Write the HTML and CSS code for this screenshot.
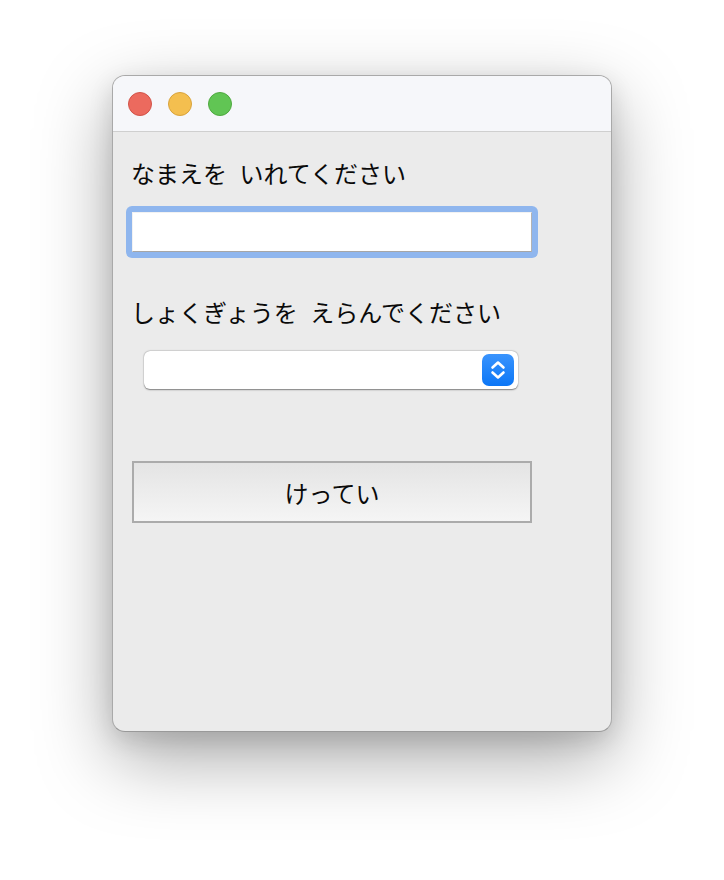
FILE: index.html
```html
<!DOCTYPE html>
<html lang="ja">
<head>
<meta charset="utf-8">
<title>Form</title>
<link rel="stylesheet" href="styles.css">
</head>
<body>
<div class="window">
  <div class="titlebar">
    <span class="light red"></span>
    <span class="light yellow"></span>
    <span class="light green"></span>
  </div>
  <div class="content">
    <div class="label">なまえを いれてください</div>
    <div class="focus-ring"><div class="textfield"></div></div>
    <div class="label label2">しょくぎょうを えらんでください</div>
    <div class="select">
      <span class="stepper">
        <svg width="32" height="32" viewBox="0 0 32 32">
          <path d="M10.5 13.5 L16 8.5 L21.5 13.5" fill="none" stroke="#fff" stroke-width="2.6" stroke-linecap="round" stroke-linejoin="round"/>
          <path d="M10.5 18.5 L16 23.5 L21.5 18.5" fill="none" stroke="#fff" stroke-width="2.6" stroke-linecap="round" stroke-linejoin="round"/>
        </svg>
      </span>
    </div>
    <div class="button">けってい</div>
  </div>
</div>
</body>
</html>
```

FILE: styles.css
```css
html, body {
  margin: 0;
  padding: 0;
  background: #ffffff;
}
body {
  padding: 75px 0 0 112px;
  min-height: 880px;
  box-sizing: border-box;
  font-family: "Noto Sans CJK JP", "Noto Sans", sans-serif;
}
.window {
  width: 498px;
  height: 655px;
  background: #ebebeb;
  border: 1px solid #a9a9a9;
  border-bottom-color: #999;
  border-radius: 13px;
  overflow: hidden;
  box-shadow: 0 26px 75px rgba(0, 0, 0, 0.34), 0 8px 24px rgba(0, 0, 0, 0.12);
}
.titlebar {
  height: 55px;
  background: #f6f7fa;
  border-bottom: 1px solid #cfcfcf;
  display: flex;
  align-items: center;
  gap: 16px;
  padding-left: 15px;
}
.light {
  width: 22px;
  height: 22px;
  border-radius: 50%;
  border: 1px solid rgba(0, 0, 0, 0.12);
}
.red { background: #ec6a5e; border-color: #d25348; }
.yellow { background: #f4bf4f; border-color: #d9a33b; }
.green { background: #61c554; border-color: #4fa93f; }
.content {
  padding: 25px 0 0 19px;
  display: flex;
  flex-direction: column;
  align-items: flex-start;
}
.label {
  font-size: 24px;
  line-height: 32px;
  word-spacing: 7px;
  color: #0a0a0a;
  white-space: nowrap;
  margin-left: -1px;
}
.focus-ring {
  margin: 17px 0 0 -6px;
  padding: 6px;
  background: #8fb6ee;
  border-radius: 6px;
}
.textfield {
  width: 398px;
  height: 38px;
  background: #fff;
  border: 1px solid #f2f2f2;
  border-right-color: #b3b3b3;
  border-bottom-color: #a6a6a6;
}
.label2 {
  margin-top: 38px;
}
.select {
  margin: 23px 0 0 12px;
  width: 374px;
  height: 38px;
  background: #fff;
  border-radius: 6px;
  box-shadow: 0 0.5px 1.5px rgba(0, 0, 0, 0.45), 0 0 0 0.5px rgba(0, 0, 0, 0.06);
  display: flex;
  align-items: center;
  justify-content: flex-end;
  padding-right: 4px;
  box-sizing: border-box;
}
.stepper {
  width: 32px;
  height: 32px;
  border-radius: 7px;
  background: linear-gradient(#3a94fd, #0b76f6);
  display: block;
}
.stepper svg { display: block; }
.button {
  margin-top: 72px;
  width: 396px;
  height: 58px;
  border: 2px solid #ababab;
  background: linear-gradient(#e4e4e4, #f5f5f5);
  font-size: 24px;
  color: #0a0a0a;
  display: flex;
  align-items: center;
  justify-content: center;
}
```
